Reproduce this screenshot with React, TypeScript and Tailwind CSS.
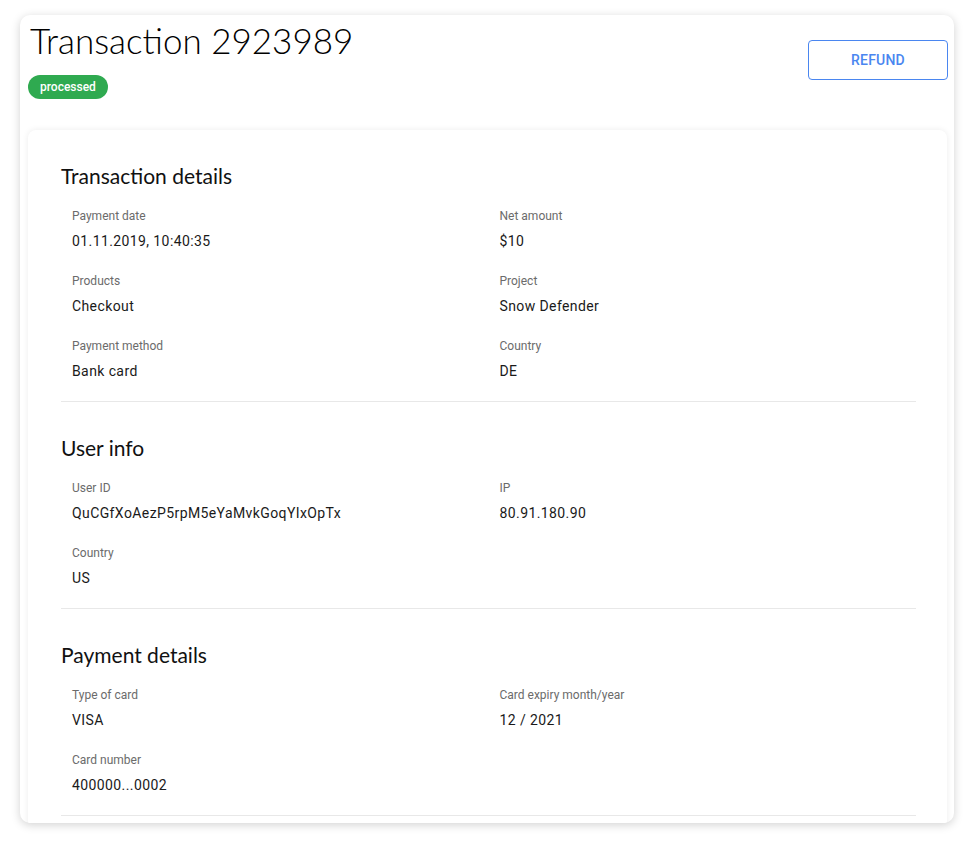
import React from "react";

type Field = { label: string; value: string };

const sections: { title: string; fields: Field[] }[] = [
  {
    title: "Transaction details",
    fields: [
      { label: "Payment date", value: "01.11.2019, 10:40:35" },
      { label: "Net amount", value: "$10" },
      { label: "Products", value: "Checkout" },
      { label: "Project", value: "Snow Defender" },
      { label: "Payment method", value: "Bank card" },
      { label: "Country", value: "DE" },
    ],
  },
  {
    title: "User info",
    fields: [
      { label: "User ID", value: "QuCGfXoAezP5rpM5eYaMvkGoqYIxOpTx" },
      { label: "IP", value: "80.91.180.90" },
      { label: "Country", value: "US" },
    ],
  },
  {
    title: "Payment details",
    fields: [
      { label: "Type of card", value: "VISA" },
      { label: "Card expiry month/year", value: "12 / 2021" },
      { label: "Card number", value: "400000...0002" },
    ],
  },
];

export default function App() {
  return (
    <div className="min-h-[847px] bg-white pt-[15px] px-[20px] font-['Roboto',sans-serif]">
      <div className="h-[808px] overflow-hidden rounded-[10px] bg-white shadow-[0_2px_10px_rgba(0,0,0,0.18)]">
        <div className="flex items-start justify-between pl-[8px] pr-[6px]">
          <div className="flex flex-col">
            <h1 className="pl-[2px] font-['Lato',sans-serif] text-[35px] font-light leading-[50px] text-black">
              Transaction 2923989
            </h1>
            <div className="mt-[9px]">
              <span className="inline-flex h-[24px] items-center rounded-full bg-[#2faa50] px-[12px] text-[12px] font-medium text-white">
                processed
              </span>
            </div>
          </div>
          <button className="mt-[25px] flex h-[40px] w-[140px] items-center justify-center rounded-[4px] border border-[#4a86f0] text-[14px] font-medium tracking-[0.2px] text-[#4a86f0]">
            REFUND
          </button>
        </div>
        <div className="ml-[8px] mr-[7px] mt-[31px] rounded-[8px] bg-white pl-[33px] pr-[31px] shadow-[0_0_6px_rgba(0,0,0,0.08)]">
          {sections.map((s) => (
            <section key={s.title} className="border-b border-[#e8e8e8] pt-[31px] pb-[20px]">
              <h2 className="font-['Lato',sans-serif] text-[21px] font-normal leading-[30px] text-[#111]">
                {s.title}
              </h2>
              <div className="mt-[17px] grid grid-cols-2 gap-y-[22px]">
                {s.fields.map((f, i) => (
                  <div key={i} className="flex flex-col px-[11px]">
                    <span className="text-[12px] leading-[16px] text-[#6b6b6b]">{f.label}</span>
                    <span className="mt-[7px] text-[14px] leading-[20px] tracking-[0.4px] text-[#1a1a1a]">
                      {f.value}
                    </span>
                  </div>
                ))}
              </div>
            </section>
          ))}
          <div className="h-[40px]" />
        </div>
      </div>
    </div>
  );
}
